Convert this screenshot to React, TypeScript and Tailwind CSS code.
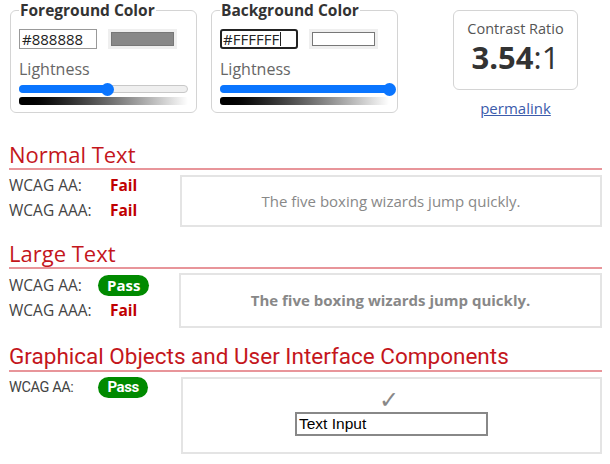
import React from 'react';

const RED = '#c4161c';

function ColorBox({ title, hex, swatch, pct, focused }: { title: string; hex: string; swatch: string; pct: number; focused?: boolean }) {
  return (
    <fieldset className="w-[187px] h-[113px] border border-[#d4d4d4] rounded-[6px] px-[8px] pb-[6px]">
      <legend className="px-[1px] text-[15.5px] font-bold text-[#333] leading-[21px]">{title}</legend>
      <div className="flex items-center gap-[11px] mt-[8px]">
        <div
          className={
            focused
              ? 'w-[78px] h-[20px] border-2 border-[#222] rounded-[3px] px-[1px] text-[15px] leading-[16px] text-[#222] flex items-center'
              : 'w-[78px] h-[20px] border border-[#999] px-[2px] text-[15px] leading-[18px] text-[#222] flex items-center'
          }
        >
          {hex}
          {focused && <span className="w-[1px] h-[14px] bg-[#222] ml-[1px]" />}
        </div>
        <div className="w-[69px] h-[20px] bg-[#efefef] p-[3px]">
          <div className="w-full h-full border border-[#777]" style={{ background: swatch }} />
        </div>
      </div>
      <div className="mt-[10px] text-[16px] leading-[20px] text-[#666]">Lightness</div>
      <div className="relative mt-[4px] h-[13px]">
        <div className="absolute left-0 right-0 top-[2px] h-[8px] rounded-full bg-[#efefef] border border-[#c8c8c8]" />
        <div className="absolute left-0 top-[2px] h-[8px] rounded-full bg-[#0a75ff]" style={{ width: `${pct}%` }} />
        <div className="absolute top-0 w-[13px] h-[13px] rounded-full bg-[#0a75ff] -ml-[6px]" style={{ left: `${pct}%` }} />
      </div>
      <div className="mt-[1px] h-[8px] rounded-[3px] bg-gradient-to-r from-black to-white" />
    </fieldset>
  );
}

function Fail() {
  return <span className="font-bold text-[#c00000]">Fail</span>;
}

function Pass() {
  return (
    <span className="inline-flex items-center h-[21px] px-[9px] rounded-full bg-[#008a00] text-white font-bold text-[15px] leading-none">
      Pass
    </span>
  );
}

function Heading({ children, roboto }: { children: React.ReactNode; roboto?: boolean }) {
  return (
    <h2
      className={`leading-[26px] pb-[1px] border-b-2 border-[#e8959a] ${roboto ? "font-['Roboto',sans-serif] text-[22.5px]" : 'text-[22px]'}`}
      style={{ color: RED }}
    >
      {children}
    </h2>
  );
}

export default function App() {
  return (
    <div className="w-[610px] h-[464px] bg-white font-['Open_Sans',sans-serif] text-[#444] pl-[9px] pr-[8px] overflow-hidden">
      <div className="flex items-start pl-[1px]">
        <ColorBox title="Foreground Color" hex="#888888" swatch="#888888" pct={52} />
        <div className="w-[14px]" />
        <ColorBox title="Background Color" hex="#FFFFFF" swatch="#ffffff" pct={100} focused />
        <div className="flex flex-col items-center ml-[55px] mt-[10px]">
          <div className="w-[125px] h-[80px] border border-[#d4d4d4] rounded-[6px] flex flex-col items-center pt-[8px]">
            <div className="text-[14.5px] leading-[20px] text-[#555]">Contrast Ratio</div>
            <div className="text-[31px] leading-[36px] text-[#333]">
              <span className="font-bold">3.54</span>:1
            </div>
          </div>
          <a className="mt-[8px] text-[15px] leading-[20px] text-[#3b5bab] underline">permalink</a>
        </div>
      </div>

      <div className="mt-[23px]">
        <Heading>Normal Text</Heading>
        <div className="flex mt-[5px]">
          <div className="w-[171px] grid grid-cols-[101px_1fr] gap-y-[4px] text-[15.5px] leading-[21px] pt-[0px] content-start">
            <span>WCAG AA:</span>
            <Fail />
            <span>WCAG AAA:</span>
            <Fail />
          </div>
          <div className="flex-1 h-[52px] border-2 border-[#e4e4e4] flex items-center justify-center text-[15px] text-[#888888]">
            The five boxing wizards jump quickly.
          </div>
        </div>
      </div>

      <div className="mt-[13px]">
        <Heading>Large Text</Heading>
        <div className="flex mt-[4px]">
          <div className="w-[170px] grid grid-cols-[89px_1fr] gap-y-[4px] text-[15.5px] leading-[21px] pt-[2px] items-center content-start">
            <span>WCAG AA:</span>
            <span className="flex">
              <Pass />
            </span>
            <span>WCAG AAA:</span>
            <span className="pl-[12px]">
              <Fail />
            </span>
          </div>
          <div className="flex-1 h-[55px] border-2 border-[#e4e4e4] flex items-center justify-center text-[15px] font-bold text-[#888888]">
            The five boxing wizards jump quickly.
          </div>
        </div>
      </div>

      <div className="mt-[15px]">
        <Heading roboto>Graphical Objects and User Interface Components</Heading>
        <div className="flex mt-[5px]">
          <div className="w-[172px] flex items-center self-start gap-[25px] text-[14.5px] leading-[21px] font-['Roboto',sans-serif] tracking-[-0.4px]">
            <span>WCAG AA:</span>
            <Pass />
          </div>
          <div className="flex-1 h-[77px] border-2 border-[#e4e4e4] flex flex-col items-center pt-[9px]">
            <span className="text-[24px] leading-[24px] text-[#888888] -ml-[5px] font-['DejaVu_Sans',sans-serif]">✓</span>
            <div className="mt-[0px] w-[193px] h-[24px] border-2 border-[#888888] px-[2px] text-[15.5px] leading-[20px] text-black font-['Liberation_Sans',sans-serif]">
              Text Input
            </div>
          </div>
        </div>
      </div>
    </div>
  );
}
